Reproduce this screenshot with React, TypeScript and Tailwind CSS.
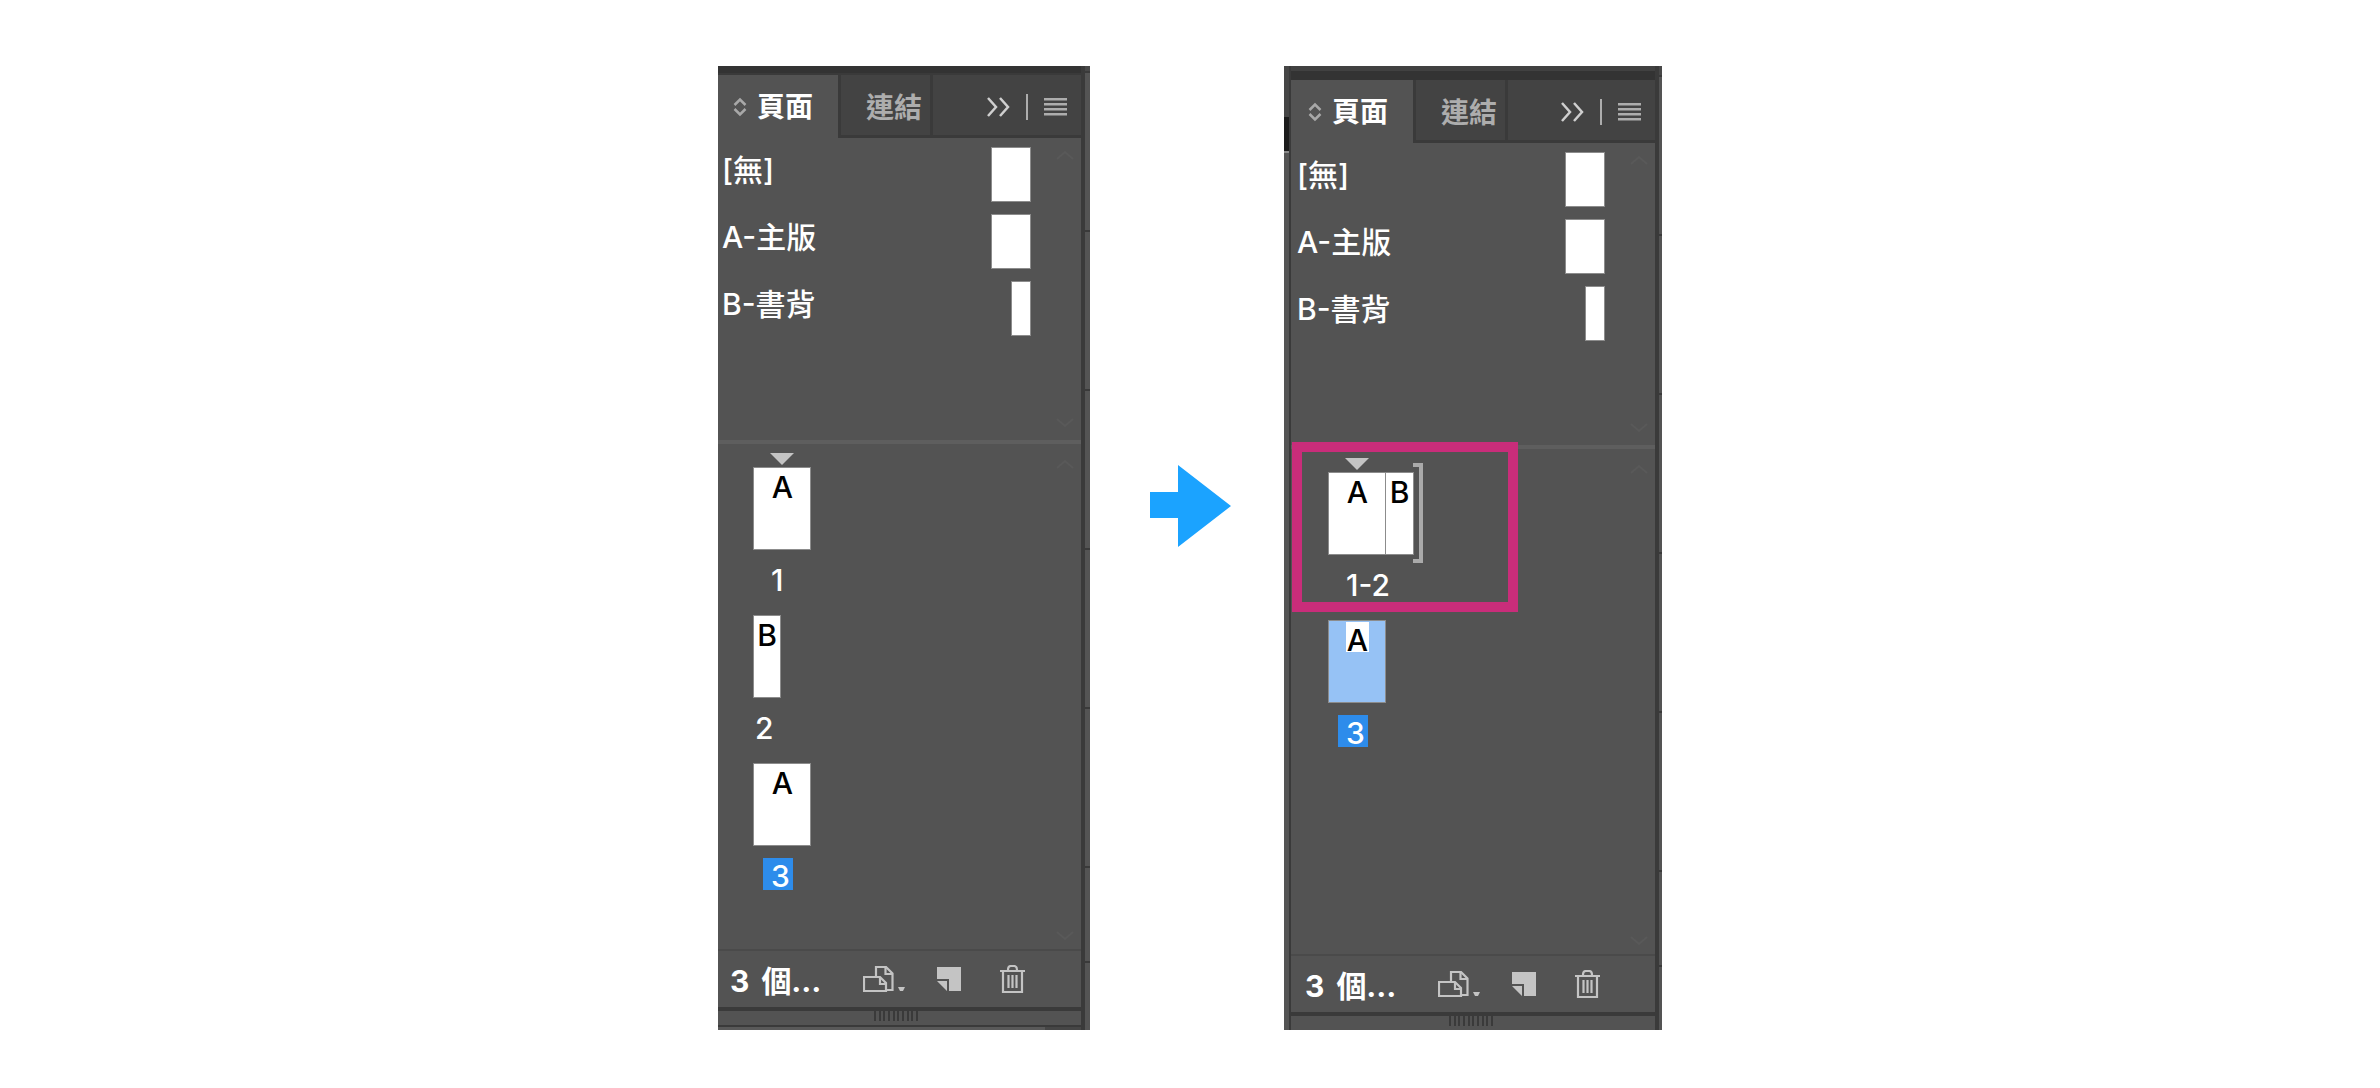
import type { ReactNode } from "react";

const FONT = "font-['Inter','Noto_Sans_CJK_TC',sans-serif]";

type MasterItem = { name: string; narrow?: boolean };

const masters: MasterItem[] = [
  { name: "[無]" },
  { name: "A-主版" },
  { name: "B-書背", narrow: true },
];

function SortIcon() {
  return (
    <svg width="14" height="20" viewBox="0 0 14 20" fill="none" stroke="#a8a8a8" strokeWidth="2.500">
      <path d="M1.500 8 7 2.500 12.500 8M1.500 12 7 17.500l5.500-5.500" />
    </svg>
  );
}

function ExpandIcon() {
  return (
    <svg width="24" height="20" viewBox="0 0 24 20" fill="none" stroke="#cfcfcf" strokeWidth="2.500">
      <path d="M2 1l8 9-8 9M14 1l8 9-8 9" />
    </svg>
  );
}

function MenuIcon() {
  return (
    <svg width="23" height="18" viewBox="0 0 23 18" fill="#adadad">
      <path d="M0 0h23v2.500H0zM0 5h23v2.500H0zM0 10h23v2.500H0zM0 15h23v2.500H0z" />
    </svg>
  );
}

function PageSizeIcon() {
  return (
    <svg width="42" height="26" viewBox="0 0 42 26" fill="none" stroke="#c4c4c4" strokeWidth="2.200">
      <path d="M13 10V1h10l6.500 6.500V24H23" />
      <path d="M22.500 1v7h7M17 11v7h6" />
      <path d="M23 25H1V11h16l6 6z" />
      <path d="M35 21h7l-2 4h-3z" fill="#c4c4c4" stroke="none" />
    </svg>
  );
}

function NewPageIcon() {
  return (
    <svg width="24" height="24" viewBox="0 0 24 24" fill="#c4c4c4">
      <path d="M0 0h24v24H12V12H0zM0 14h10v10z" />
    </svg>
  );
}

function TrashIcon() {
  return (
    <svg width="25" height="28" viewBox="0 0 25 28" fill="none" stroke="#c4c4c4" strokeWidth="2.200">
      <path d="M0 6h25M8 5c0-3 1-4 3-4h3c2 0 3 1 3 4M3 6v21h19V6M8.500 10v13M12.500 10v13M16.500 10v13" />
    </svg>
  );
}

function ScrollHint({ up = false }: { up?: boolean }) {
  return (
    <svg width="18" height="10" viewBox="0 0 18 10" fill="none" stroke="#595959" strokeWidth="2">
      <path d={up ? "M1 9l8-7 8 7" : "M1 1l8 7 8-7"} />
    </svg>
  );
}

function PageThumb({
  master,
  narrow = false,
  selected = false,
  joined = false,
}: {
  master: string;
  narrow?: boolean;
  selected?: boolean;
  joined?: boolean;
}) {
  return (
    <button
      type="button"
      className={`flex h-[83px] items-start justify-center border border-[#8c8c8c] pt-px text-[30px] font-medium text-black ${
        narrow ? "w-7" : "w-[58px] pl-px"
      } ${joined ? "border-l-0" : ""} ${selected ? "bg-[#96c2f5]" : "bg-white"}`}
    >
      <span className="h-[30px] bg-white px-px leading-9">{master}</span>
    </button>
  );
}

function PageLabel({ children, selected = false, narrow = false }: { children: ReactNode; selected?: boolean; narrow?: boolean }) {
  return (
    <div
      className={`mt-3 h-8 min-w-[30px] pl-2 text-[30px] leading-9 font-medium whitespace-nowrap text-white ${
        narrow ? "-ml-[6px]" : "ml-[10px]"
      } ${selected ? "w-[30px] bg-[#2d8ceb]" : "w-fit"}`}
    >
      {children}
    </div>
  );
}

function StartMarker() {
  return (
    <svg className="absolute -top-[14px] left-[17px]" width="24" height="12" viewBox="0 0 24 12" fill="#c4c4c4">
      <path d="M0 0h24L12 12z" />
    </svg>
  );
}

function Neighbour({ first }: { first: ReactNode }) {
  return (
    <div className="flex flex-1 flex-col bg-[#545454]">
      {first}
      <div className="h-[159px] border-b-2 border-[#3a3a3a]" />
      <div className="h-[159px] border-b-2 border-[#3a3a3a]" />
      <div className="h-[159px] border-b-2 border-[#3a3a3a]" />
      <div className="h-[159px] border-b-2 border-[#3a3a3a]" />
      <div className="h-[159px] border-b-2 border-[#3a3a3a]" />
      <div className="h-[95px] border-b-2 border-[#3a3a3a]" />
    </div>
  );
}

function PagesPanel({ inset = false, children }: { inset?: boolean; children: ReactNode }) {
  const pad = inset ? "pl-[2px]" : "";
  return (
    <>
      <div className="flex h-[63px] bg-[#434343]" role="tablist">
        <button
          type="button"
          role="tab"
          aria-selected="true"
          className={`flex items-center gap-[10px] bg-[#535353] pt-px text-[28px] font-bold text-white ${
            inset ? "w-[122px] pl-[17px]" : "w-[120px] pl-[15px]"
          }`}
        >
          <SortIcon />
          <span className="leading-[60px]">頁面</span>
        </button>
        <div className="flex flex-1 border-b-[3px] border-l-[3px] border-[#3a3a3a] leading-[60px]">
          <button
            type="button"
            role="tab"
            aria-selected="false"
            className="w-[92px] border-r-[3px] border-[#3a3a3a] pt-[3px] pl-[25px] text-left text-[28px] font-bold text-[#adadad]"
          >
            連結
          </button>
          <div className="flex flex-1 items-center justify-end gap-4 pt-1 pr-[14px]">
            <button type="button" aria-label="展開">
              <ExpandIcon />
            </button>
            <span className="h-[26px] w-[2px] bg-[#adadad]" />
            <button type="button" aria-label="選單">
              <MenuIcon />
            </button>
          </div>
        </div>
      </div>

      <section className={`flex h-[302px] bg-[#535353] ${pad}`}>
        <ul className="flex flex-1 flex-col gap-3 pt-[9px] pl-1">
          {masters.map((m) => (
            <li key={m.name} className="flex h-[55px] justify-between">
              <span className="text-[30px] leading-[46px] font-medium text-white">{m.name}</span>
              <span className={`border border-[#8c8c8c] bg-white ${m.narrow ? "w-5" : "w-10"}`} />
            </li>
          ))}
        </ul>
        <div className="flex w-[50px] flex-col items-end justify-between pt-3 pr-[7px] pb-3">
          <ScrollHint up />
          <ScrollHint />
        </div>
      </section>

      <div className="h-1 bg-[#5e5e5e]" />

      <section className={`flex h-[505px] bg-[#535353] ${pad}`}>
        <div className="flex flex-1 flex-col gap-[21px] pt-[23px] pl-[35px]">{children}</div>
        <div className="flex w-[50px] flex-col items-end justify-between pt-[15px] pr-[7px] pb-2">
          <ScrollHint up />
          <ScrollHint />
        </div>
      </section>

      <footer className={`flex h-[58px] items-center border-t-2 border-[#4a4a4a] bg-[#535353] ${pad}`}>
        <span className="flex w-[145px] gap-3 pt-1 pl-3 text-[30px] leading-[52px] font-bold whitespace-nowrap text-white">
          <span>3</span>
          <span>個…</span>
        </span>
        <button type="button" aria-label="編輯頁面大小" className="mr-8">
          <PageSizeIcon />
        </button>
        <button type="button" aria-label="新增頁面" className="mr-[39px]">
          <NewPageIcon />
        </button>
        <button type="button" aria-label="刪除頁面">
          <TrashIcon />
        </button>
      </footer>

      <div className="h-1 bg-[#3a3a3a]" />
      <div className={`flex flex-1 justify-center bg-[#535353] ${inset ? "" : "pr-1"}`}>
        <svg className="-ml-1" width="44" height="10" viewBox="0 0 44 10" fill="#3a3a3a">
          <path d="M0 0h2v10H0zM5 0h2v10H5zM9 0h2v10H9zM14 0h2v10h-2zM19 0h2v10h-2zM23 0h2v10h-2zM28 0h2v10h-2zM33 0h2v10h-2zM37 0h2v10h-2zM42 0h2v10h-2z" />
        </svg>
      </div>
    </>
  );
}

export default function App() {
  return (
    <main className={`flex min-h-screen items-start justify-center bg-white pt-[66px] ${FONT}`}>
      <div className="flex h-[964px] w-[372px] overflow-hidden">
        <div className="flex w-[363px] flex-col">
          <div className="h-[9px] border-b-2 border-[#3a3a3a] bg-[#333333]" />
          <PagesPanel>
            <div>
              <div className="relative w-fit">
                <StartMarker />
                <PageThumb master="A" />
              </div>
              <PageLabel>1</PageLabel>
            </div>
            <div>
              <PageThumb master="B" narrow />
              <PageLabel narrow>2</PageLabel>
            </div>
            <div>
              <PageThumb master="A" />
              <PageLabel selected>3</PageLabel>
            </div>
          </PagesPanel>
          <div className="flex h-[5px] justify-end border-t-2 border-[#3a3a3a] bg-[#595959]">
            <span className="w-9 bg-[#464646]" />
          </div>
        </div>
        <div className="w-1 bg-[#3a3a3a]" />
        <Neighbour first={<div className="h-[7px] border-b-2 border-[#3a3a3a] bg-[#484848]" />} />
      </div>

      <svg className="mt-[399px] mr-[53px] ml-[60px]" width="81" height="82" viewBox="0 0 81 82" fill="#1ba3ff">
        <path d="M0 27h28V0l53 41-53 41V53H0z" />
      </svg>

      <div className="flex h-[964px] w-[378px] overflow-hidden">
        <div className="flex w-[5px] flex-col bg-[#545454]">
          <div className="h-[51px] bg-[#464646]" />
          <div className="h-[34px] bg-[#1c1c1c]" />
          <div className="h-[2px] bg-[#8a8a8a]" />
        </div>
        <div className="w-[2px] bg-[#3a3a3a]" />
        <div className="flex w-[364px] flex-col">
          <div className="h-[5px] bg-[#414141]" />
          <div className="h-[9px] bg-[#333333]" />
          <PagesPanel inset>
            <div className="relative w-fit">
              <div className="relative flex w-fit">
                <StartMarker />
                <PageThumb master="A" />
                <PageThumb master="B" narrow joined />
                <span className="absolute -top-[9px] -right-[9px] h-[100px] w-[10px] border-y-4 border-r-4 border-[#aaaaaa]" />
              </div>
              <PageLabel>1-2</PageLabel>
              <span className="absolute -top-[30px] -left-9 h-[170px] w-[226px] border-[10px] border-[#c92d7a]" />
            </div>
            <div>
              <PageThumb master="A" selected />
              <PageLabel selected>3</PageLabel>
            </div>
          </PagesPanel>
        </div>
        <div className="w-1 bg-[#3a3a3a]" />
        <Neighbour first={<div className="h-[11px] border-b-2 border-[#3a3a3a] bg-[#484848]" />} />
      </div>
    </main>
  );
}
